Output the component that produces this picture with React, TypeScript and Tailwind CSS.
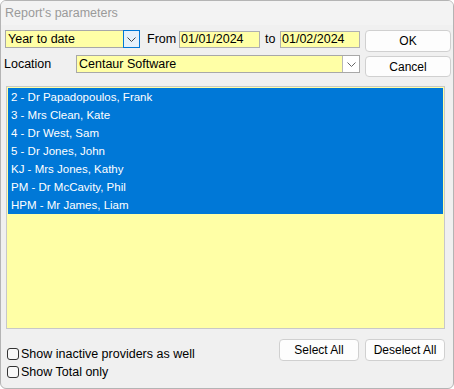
import React from 'react';

// Report's parameters dialog

const providers = [
  '2 - Dr Papadopoulos, Frank',
  '3 - Mrs Clean, Kate',
  '4 - Dr West, Sam',
  '5 - Dr Jones, John',
  'KJ - Mrs Jones, Kathy',
  'PM - Dr McCavity, Phil',
  'HPM - Mr James, Liam',
];

function Chevron({ color = '#444' }: { color?: string }) {
  return (
    <svg width="9" height="5" viewBox="0 0 9 5" fill="none">
      <path d="M0.5 0.5 L4.5 4.5 L8.5 0.5" stroke={color} strokeWidth="1" />
    </svg>
  );
}

function DialogButton({ label, className }: { label: string; className: string }) {
  return (
    <button
      className={`flex items-center justify-center bg-[#fdfdfd] border border-[#d0d0d0] rounded-[4px] text-[12px] text-black ${className}`}
    >
      {label}
    </button>
  );
}

function CheckRow({ label }: { label: string }) {
  return (
    <label className="flex items-center h-[18px] gap-[2px]">
      <span className="w-[12px] h-[12px] border border-[#333] rounded-[3px] bg-[#f8f8f8]" />
      <span className="text-[12.5px] text-black leading-none">{label}</span>
    </label>
  );
}

export default function App() {
  return (
    <div
      className="w-[454px] h-[389px] bg-[#f0f0f0] border border-[#b4b4b4] rounded-[6px] flex flex-col overflow-hidden"
      style={{ fontFamily: '"Liberation Sans", Arial, sans-serif' }}
    >
      {/* Title */}
      <div className="h-[24px] pl-[4px] flex items-center text-[12.5px] text-[#9a9a9a] bg-[#f3f3f3]">
        Report's parameters
      </div>

      {/* Row 1: period + dates + OK */}
      <div className="flex items-start mt-[5px] pl-[4px]">
        <div className="w-[135px] h-[18px] flex bg-[#ffffa6] border border-[#a8a8a8]">
          <span className="flex-1 pl-[2px] text-[12.5px] leading-[16px] text-black">Year to date</span>
          <span className="w-[17px] h-[18px] -mt-px -mr-px flex items-center justify-center bg-[#e5f1fb] border border-[#0078d7]">
            <Chevron />
          </span>
        </div>
        <span className="ml-[7px] w-[32px] text-[12.5px] leading-[18px] text-black">From</span>
        <div className="w-[81px] h-[17px] mt-px bg-[#ffffa6] border border-[#b0b0b0] pl-[1px] text-[12.5px] leading-[15px] text-black">
          01/01/2024
        </div>
        <span className="ml-[5px] w-[15px] text-[12.5px] leading-[18px] text-black">to</span>
        <div className="w-[80px] h-[17px] mt-px bg-[#ffffa6] border border-[#b0b0b0] pl-[1px] text-[12.5px] leading-[15px] text-black">
          01/02/2024
        </div>
        <DialogButton label="OK" className="ml-[5px] w-[86px] h-[22px]" />
      </div>

      {/* Row 2: location + Cancel */}
      <div className="flex items-start mt-[3px] pl-[3px]">
        <span className="w-[72px] text-[12.5px] leading-[18px] text-black">Location</span>
        <div className="w-[284px] h-[18px] flex bg-[#ffffa6] border border-[#a8a8a8]">
          <span className="flex-1 pl-[2px] text-[12.5px] leading-[16px] text-black">Centaur Software</span>
          <span className="w-[17px] flex items-center justify-center bg-white border-l border-[#b8b8b8]">
            <Chevron color="#666" />
          </span>
        </div>
        <DialogButton label="Cancel" className="ml-[5px] mt-px w-[86px] h-[21px]" />
      </div>

      {/* Provider list */}
      <div className="ml-[5px] mt-[9px] w-[439px] h-[243px] bg-[#ffffa6] border border-[#c8c8c8] p-px">
        {providers.map((p) => (
          <div key={p} className="h-[18px] bg-[#0078d7] pl-[3px] text-[11.5px] leading-[18px] text-white">
            {p}
          </div>
        ))}
      </div>

      {/* Footer */}
      <div className="flex items-start mt-[10px]">
        <div className="flex flex-col pl-[6px] pt-[6px]">
          <CheckRow label="Show inactive providers as well" />
          <CheckRow label="Show Total only" />
        </div>
        <div className="ml-auto mr-[8px] flex gap-[6px]">
          <DialogButton label="Select All" className="w-[80px] h-[22px]" />
          <DialogButton label="Deselect All" className="w-[80px] h-[22px]" />
        </div>
      </div>
    </div>
  );
}
